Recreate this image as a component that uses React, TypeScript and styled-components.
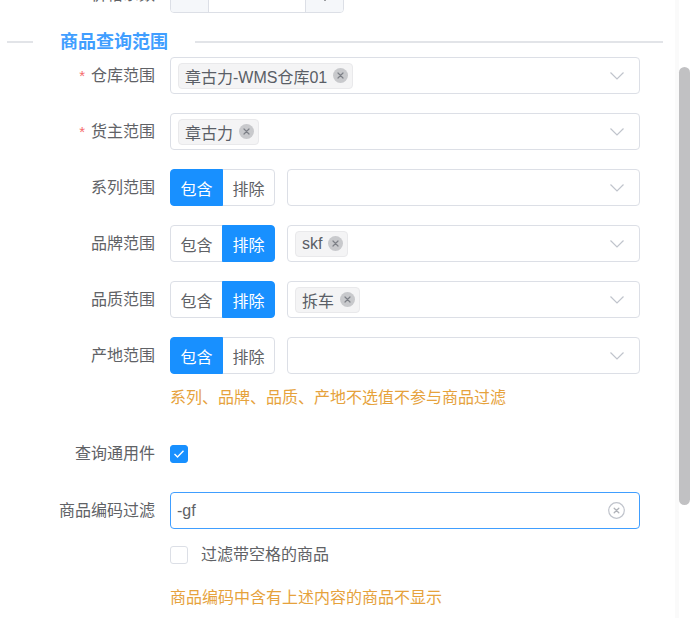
import { useLayoutEffect, useRef } from "react"
import styled, { createGlobalStyle } from "styled-components"

const GlobalStyle = createGlobalStyle`
    html, body {
        margin: 0;
        padding: 0;
        background: #fff;
    }
    body {
        font-family: "Liberation Sans", "Noto Sans CJK SC", sans-serif;
        color: #606266;
    }
`

type Mode = "include" | "exclude"

const rangeRows: { label: string; mode: Mode; tags: string[] }[] = [
    { label: "系列范围", mode: "include", tags: [] },
    { label: "品牌范围", mode: "exclude", tags: ["skf"] },
    { label: "品质范围", mode: "exclude", tags: ["拆车"] },
]

function Chevron() {
    return (
        <ArrowIcon width="14" height="8" viewBox="0 0 14 8">
            <polyline
                points="0.5,0.5 7,7 13.5,0.5"
                fill="none"
                stroke="#c0c4cc"
                strokeWidth="1.2"
            />
        </ArrowIcon>
    )
}

function Tag({ text }: { text: string }) {
    return (
        <TagBox>
            {text}
            <TagClose width="15" height="15" viewBox="0 0 15 15">
                <circle cx="7.5" cy="7.5" r="7.5" fill="#c8c9cc" />
                <path
                    d="M5 5 L10 10 M10 5 L5 10"
                    stroke="#7d8087"
                    strokeWidth="1.2"
                    strokeLinecap="round"
                />
            </TagClose>
        </TagBox>
    )
}

function Select({ tags }: { tags: string[] }) {
    return (
        <SelectBox>
            {tags.map((t) => (
                <Tag key={t} text={t} />
            ))}
            <Chevron />
        </SelectBox>
    )
}

function ModeSwitch({ mode }: { mode: Mode }) {
    return (
        <ModeGroup>
            <ModeButton $active={mode === "include"}>包含</ModeButton>
            <ModeButton $active={mode === "exclude"}>排除</ModeButton>
        </ModeGroup>
    )
}

function Checkbox({ checked }: { checked?: boolean }) {
    return (
        <CheckBox $checked={!!checked}>
            {checked && (
                <svg width="12" height="10" viewBox="0 0 12 10">
                    <polyline
                        points="1.5,5 4.5,8 10.5,1.8"
                        fill="none"
                        stroke="#fff"
                        strokeWidth="1.4"
                    />
                </svg>
            )}
        </CheckBox>
    )
}

export default function App() {
    const viewRef = useRef<HTMLDivElement>(null)

    useLayoutEffect(() => {
        if (viewRef.current) {
            viewRef.current.scrollTop = 95
        }
    }, [])

    return (
        <>
            <GlobalStyle />
            <Page>
                <Viewport ref={viewRef}>
                    <Content>
                        <FormItem $mb={17}>
                            <Label>价格系数</Label>
                            <NumberInput>
                                <StepButton>
                                    <svg width="12" height="12" viewBox="0 0 12 12">
                                        <path
                                            d="M0 6 H12"
                                            stroke="#606266"
                                            strokeWidth="1.2"
                                        />
                                    </svg>
                                </StepButton>
                                <NumberValue>1.00</NumberValue>
                                <StepButton>
                                    <svg width="12" height="12" viewBox="0 0 12 12">
                                        <path
                                            d="M0 6 H12 M6 0 V12"
                                            stroke="#606266"
                                            strokeWidth="1.2"
                                        />
                                    </svg>
                                </StepButton>
                            </NumberInput>
                        </FormItem>

                        <Divider>
                            <DividerLine $w={26} />
                            <DividerText>商品查询范围</DividerText>
                            <DividerLine />
                        </Divider>

                        <FormItem>
                            <Label $required>仓库范围</Label>
                            <Control>
                                <Select tags={["章古力-WMS仓库01"]} />
                            </Control>
                        </FormItem>

                        <FormItem>
                            <Label $required>货主范围</Label>
                            <Control>
                                <Select tags={["章古力"]} />
                            </Control>
                        </FormItem>

                        {rangeRows.map((r) => (
                            <FormItem key={r.label}>
                                <Label>{r.label}</Label>
                                <Control>
                                    <ModeRow>
                                        <ModeSwitch mode={r.mode} />
                                        <Select tags={r.tags} />
                                    </ModeRow>
                                </Control>
                            </FormItem>
                        ))}

                        <FormItem $mb={26}>
                            <Label>产地范围</Label>
                            <Control>
                                <ModeRow>
                                    <ModeSwitch mode="include" />
                                    <Select tags={[]} />
                                </ModeRow>
                                <Hint $mt={13}>
                                    系列、品牌、品质、产地不选值不参与商品过滤
                                </Hint>
                            </Control>
                        </FormItem>

                        <FormItem $mb={20}>
                            <Label>查询通用件</Label>
                            <Control>
                                <InlineBox>
                                    <Checkbox checked />
                                </InlineBox>
                            </Control>
                        </FormItem>

                        <FormItem>
                            <Label>商品编码过滤</Label>
                            <Control>
                                <InputBox>
                                    <TextInput defaultValue="-gf" />
                                    <svg width="17" height="17" viewBox="0 0 17 17">
                                        <circle
                                            cx="8.5"
                                            cy="8.5"
                                            r="7.8"
                                            fill="none"
                                            stroke="#c0c4cc"
                                            strokeWidth="1.2"
                                        />
                                        <path
                                            d="M6.2 6.2 L10.8 10.8 M10.8 6.2 L6.2 10.8"
                                            stroke="#b0b3b9"
                                            strokeWidth="1.3"
                                            strokeLinecap="round"
                                        />
                                    </svg>
                                </InputBox>
                                <CheckRow>
                                    <Checkbox />
                                    <span>过滤带空格的商品</span>
                                </CheckRow>
                                <Hint $mt={21}>商品编码中含有上述内容的商品不显示</Hint>
                            </Control>
                        </FormItem>
                    </Content>
                </Viewport>
                <ScrollRail>
                    <ScrollThumb />
                </ScrollRail>
            </Page>
        </>
    )
}

const Page = styled.div`
    display: flex;
    height: 100vh;
    overflow: hidden;
`

const Viewport = styled.div`
    flex: 1;
    min-width: 0;
    overflow: hidden;
`

const ScrollRail = styled.div`
    width: 11px;
    flex-shrink: 0;
    background: #fff;
    box-shadow: -4px 0 0 #fafafa;
`

const ScrollThumb = styled.div`
    margin-top: 67px;
    height: 438px;
    background: #c1c1c3;
    border-radius: 6px;
`

const Content = styled.div`
    padding: 71px 0 151px;
    font-size: 16px;
`

const FormItem = styled.div<{ $mb?: number }>`
    display: flex;
    align-items: flex-start;
    width: 640px;
    margin-bottom: ${(p) => p.$mb ?? 19}px;
`

const Label = styled.label<{ $required?: boolean }>`
    flex-shrink: 0;
    width: 170px;
    box-sizing: border-box;
    padding-right: 15px;
    text-align: right;
    line-height: 37px;
    color: #606266;

    &::before {
        content: ${(p) => (p.$required ? '"*"' : "none")};
        color: #f56c6c;
        font-size: 15px;
        margin-right: 6px;
    }
`

const Control = styled.div`
    flex: 1;
    min-width: 0;
`

const SelectBox = styled.div`
    flex: 1;
    height: 37px;
    box-sizing: border-box;
    border: 1px solid #dcdfe6;
    border-radius: 4px;
    background: #fff;
    display: flex;
    align-items: center;
    gap: 6px;
    padding: 0 15px 0 7px;
`

const ArrowIcon = styled.svg`
    margin-left: auto;
    flex-shrink: 0;
`

const TagBox = styled.span`
    display: inline-flex;
    align-items: center;
    height: 26px;
    box-sizing: border-box;
    padding: 0 4px 0 6px;
    gap: 6px;
    background: #f4f4f5;
    border: 1px solid #e9e9eb;
    border-radius: 4px;
    color: #5a5e66;
    font-size: 16px;
    white-space: nowrap;
`

const TagClose = styled.svg`
    flex-shrink: 0;
`

const ModeRow = styled.div`
    display: flex;
    gap: 12px;
`

const ModeGroup = styled.div`
    display: flex;
    flex-shrink: 0;
`

const ModeButton = styled.button<{ $active: boolean }>`
    position: relative;
    z-index: ${(p) => (p.$active ? 1 : 0)};
    width: 53px;
    height: 37px;
    padding: 0;
    font: inherit;
    font-size: 16px;
    border: 1px solid ${(p) => (p.$active ? "#1890ff" : "#dcdfe6")};
    background: ${(p) => (p.$active ? "#1890ff" : "#fff")};
    color: ${(p) => (p.$active ? "#fff" : "#606266")};

    &:first-child {
        border-radius: 4px 0 0 4px;
    }
    &:last-child {
        margin-left: -1px;
        border-radius: 0 4px 4px 0;
    }
`

const Hint = styled.div<{ $mt: number }>`
    margin-top: ${(p) => p.$mt}px;
    line-height: 22px;
    color: #e6a23c;
`

const InlineBox = styled.div`
    height: 37px;
    display: flex;
    align-items: center;
`

const CheckBox = styled.span<{ $checked: boolean }>`
    width: 18px;
    height: 18px;
    box-sizing: border-box;
    border-radius: 3px;
    border: 1px solid ${(p) => (p.$checked ? "#1890ff" : "#dcdfe6")};
    background: ${(p) => (p.$checked ? "#1890ff" : "#fff")};
    display: inline-flex;
    align-items: center;
    justify-content: center;
    flex-shrink: 0;
`

const CheckRow = styled.div`
    display: flex;
    align-items: center;
    gap: 13px;
    margin-top: 15px;
    line-height: 22px;
    color: #606266;
`

const InputBox = styled.div`
    height: 37px;
    box-sizing: border-box;
    border: 1px solid #409eff;
    border-radius: 4px;
    display: flex;
    align-items: center;
    padding: 0 14px 0 6px;
`

const TextInput = styled.input`
    flex: 1;
    min-width: 0;
    border: none;
    outline: none;
    padding: 0;
    font: inherit;
    font-size: 16px;
    color: #606266;
    background: transparent;
`

const NumberInput = styled.div`
    display: flex;
    width: 174px;
    height: 37px;
    box-sizing: border-box;
    border: 1px solid #dcdfe6;
    border-radius: 4px;
    overflow: hidden;
`

const StepButton = styled.span`
    width: 37px;
    flex-shrink: 0;
    background: #f5f7fa;
    display: flex;
    align-items: center;
    justify-content: center;

    &:first-child {
        border-right: 1px solid #dcdfe6;
    }
    &:last-child {
        border-left: 1px solid #dcdfe6;
    }
`

const NumberValue = styled.span`
    flex: 1;
    text-align: center;
    line-height: 35px;
    color: #606266;
`

const Divider = styled.div`
    display: flex;
    align-items: center;
    width: 656px;
    margin: 0 0 3px 7px;
    height: 24px;
`

const DividerLine = styled.div<{ $w?: number }>`
    height: 2px;
    background: #e2e4e8;
    ${(p) => (p.$w ? `width: ${p.$w}px; flex-shrink: 0;` : "flex: 1;")}
`

const DividerText = styled.div`
    padding: 0 27px;
    font-size: 18px;
    font-weight: bold;
    color: #409eff;
    line-height: 24px;
`
